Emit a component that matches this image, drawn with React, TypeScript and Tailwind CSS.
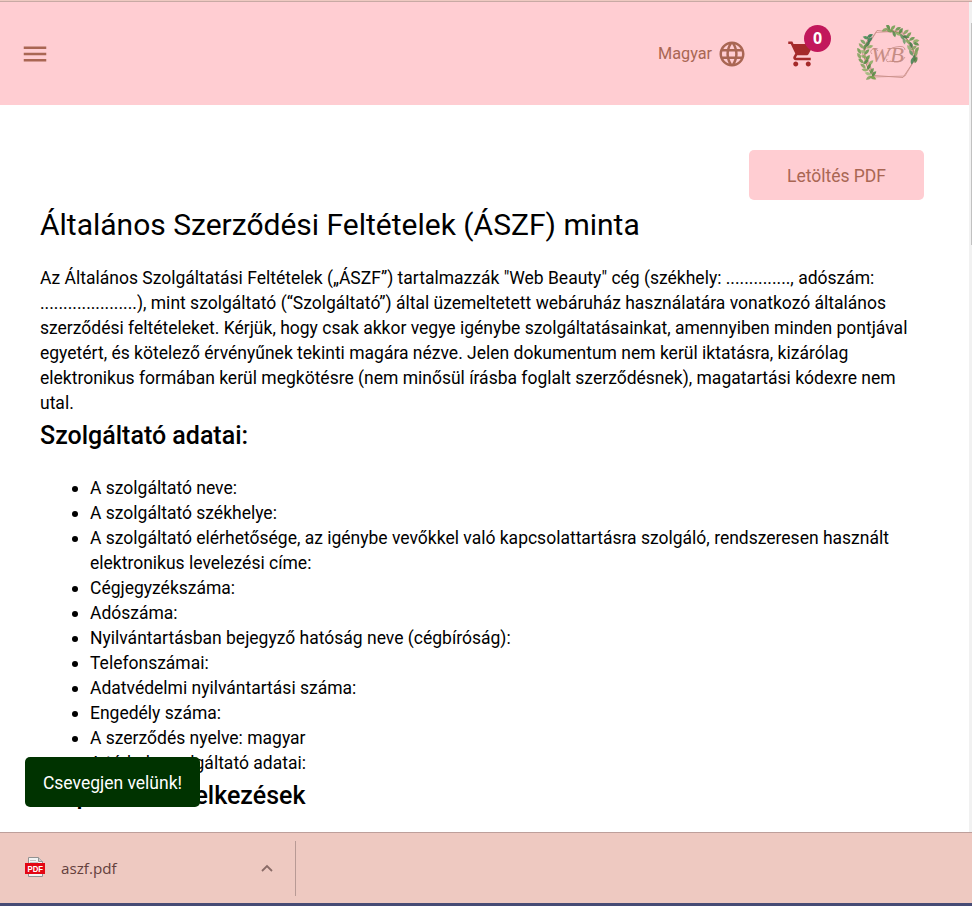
import React from "react";

const paragraph = [
  'Az Általános Szolgáltatási Feltételek („ÁSZF”) tartalmazzák "Web Beauty" cég (székhely: .............., adószám:',
  ".....................), mint szolgáltató (“Szolgáltató”) által üzemeltetett webáruház használatára vonatkozó általános",
  "szerződési feltételeket. Kérjük, hogy csak akkor vegye igénybe szolgáltatásainkat, amennyiben minden pontjával",
  "egyetért, és kötelező érvényűnek tekinti magára nézve. Jelen dokumentum nem kerül iktatásra, kizárólag",
  "elektronikus formában kerül megkötésre (nem minősül írásba foglalt szerződésnek), magatartási kódexre nem",
  "utal.",
];

const items: string[][] = [
  ["A szolgáltató neve:"],
  ["A szolgáltató székhelye:"],
  [
    "A szolgáltató elérhetősége, az igénybe vevőkkel való kapcsolattartásra szolgáló, rendszeresen használt",
    "elektronikus levelezési címe:",
  ],
  ["Cégjegyzékszáma:"],
  ["Adószáma:"],
  ["Nyilvántartásban bejegyző hatóság neve (cégbíróság):"],
  ["Telefonszámai:"],
  ["Adatvédelmi nyilvántartási száma:"],
  ["Engedély száma:"],
  ["A szerződés nyelve: magyar"],
  ["A tárhely szolgáltató adatai:"],
];

// x, y, rotation and shade of every leaf on the wreath
const leaves: [number, number, number, string][] = [
  [28, 5, -20, "#7fa05a"], [31, 2, 60, "#4f8a3f"], [33, 6, 10, "#6b9a4c"], [36, 3, -50, "#6f9f4c"],
  [37, 9, 70, "#4f8a45"], [41, 4, -30, "#5f9348"], [41, 9, 30, "#86ab5e"], [44, 6, -60, "#4f8a3f"],
  [45, 12, 60, "#5b8f58"], [49, 7, -40, "#7fa05a"], [49, 12, 10, "#3f7a45"], [52, 10, -50, "#6b9a4c"],
  [47, 16, 80, "#6b9a6c"], [51, 17, 40, "#86ab5e"], [55, 14, -30, "#5f9348"], [59, 16, -10, "#86ab5e"],
  [54, 20, 70, "#3f7a45"], [59, 19, 20, "#4f8a3f"], [52, 23, 60, "#8faf70"], [57, 23, -40, "#7fa05a"],
  [60, 25, -60, "#6b9a4c"], [54, 28, 60, "#5b8f58"], [59, 29, -60, "#7fa05a"], [57, 33, 90, "#3f7a45"],
  [55, 36, 100, "#3d8050"], [59, 35, -70, "#4f7f3f"],
  [13, 11, -30, "#2f7a50"], [9, 13, 20, "#3f8a4f"], [13, 15, -50, "#2f7a50"], [6, 17, 40, "#6fa05a"],
  [11, 19, -60, "#3f7a45"], [4, 21, 50, "#7fa05a"], [8, 22, -70, "#5b8f48"], [13, 22, -20, "#86ab5e"],
  [2, 26, 60, "#6b9a4c"], [6, 27, 20, "#9ab878"], [10, 27, -50, "#5f9348"], [2, 31, 60, "#7fa05a"],
  [7, 32, 20, "#86ab5e"], [11, 33, -60, "#5f9348"], [4, 36, 40, "#6b9a4c"], [9, 37, -40, "#4f8a3f"],
  [14, 38, -50, "#86ab5e"], [6, 41, 40, "#7fa05a"], [12, 42, -60, "#4f8a3f"], [8, 45, 10, "#86ab5e"],
  [15, 46, -60, "#5f9348"], [11, 49, 20, "#9ab878"], [17, 49, -50, "#4f8a3f"], [12, 53, -30, "#7fa05a"],
  [16, 53, 20, "#6b9a3c"],
];

function Logo() {
  return (
    <svg width="64" height="56" viewBox="0 0 64 56" className="block">
      <g fill="none" stroke="#c98f88" strokeWidth=".9">
        <path d="M20 5.500 46 8 59 33 46 52.500 17 50.500 5 28Z" />
        <path d="M19 7.500 45 6 60 31 48 51 18 52 7 27Z" strokeWidth=".7" />
      </g>
      <g fill="none" stroke="#9a7a55" strokeWidth=".8">
        <path d="M29 4Q48 7 54 20T57 36M14 10Q-1 30 17 52" />
      </g>
      {leaves.map(([x, y, angle, color], i) => (
        <path key={i} d="M-3.500 0Q0-3.700 3.500 0Q0 2.700-3.500 0Z" fill={color} fillOpacity=".85" transform={`translate(${x} ${y}) rotate(${angle})`} />
      ))}
      <text x="14" y="37" fontSize="20" fontStyle="italic" fontFamily="Liberation Serif, serif" fill="#c58c84" textLength="33" lengthAdjust="spacingAndGlyphs">WB</text>
      <path d="M15 29q-3-3 1-5q4-1 5 2M31 31q-1-8 8-9q9-2 9 3M30 34q-2 4 4 2M37 37q8 1 11-5" fill="none" stroke="#c58c84" strokeWidth=".8" />
    </svg>
  );
}

function Header() {
  return (
    <header className="flex h-[103px] items-start bg-[#ffcdd2] text-[#a96653]">
      <svg className="mt-[37px] ml-5" width="30" height="30" viewBox="0 0 24 24" fill="currentColor">
        <path d="M3 18h18v-2H3v2zm0-5h18v-2H3v2zm0-7v2h18V6H3z" />
      </svg>
      <div className="mt-[37px] ml-auto flex h-[30px] items-center">
        <span className="w-[59px] text-[16.250px] whitespace-nowrap">Magyar</span>
        <svg width="30" height="30" viewBox="0 0 24 24" fill="currentColor">
          <path d="M11.990 2C6.470 2 2 6.480 2 12s4.470 10 9.990 10C17.520 22 22 17.520 22 12S17.520 2 11.990 2zm6.930 6h-2.950c-.320-1.250-.780-2.450-1.380-3.560 1.840.630 3.370 1.910 4.330 3.560zM12 4.040c.830 1.200 1.480 2.530 1.910 3.960h-3.820c.430-1.430 1.080-2.760 1.910-3.960zM4.260 14C4.100 13.360 4 12.690 4 12s.100-1.360.260-2h3.380c-.080.660-.140 1.320-.140 2s.060 1.340.140 2H4.260zm.820 2h2.950c.320 1.250.780 2.450 1.380 3.560-1.840-.630-3.370-1.900-4.330-3.560zm2.950-8H5.080c.960-1.660 2.490-2.930 4.330-3.560C8.810 5.550 8.350 6.750 8.030 8zM12 19.960c-.830-1.200-1.480-2.530-1.910-3.960h3.820c-.430 1.430-1.080 2.760-1.910 3.960zM14.340 14H9.660c-.090-.660-.160-1.320-.160-2s.070-1.350.160-2h4.680c.090.650.160 1.320.160 2s-.070 1.340-.160 2zm.250 5.560c.600-1.110 1.060-2.310 1.380-3.560h2.950c-.960 1.650-2.490 2.930-4.330 3.560zM16.360 14c.080-.660.140-1.320.140-2s-.060-1.340-.140-2h3.380c.160.640.260 1.310.260 2s-.100 1.360-.260 2h-3.380z" />
        </svg>
      </div>
      <div className="relative mt-[37px] ml-[40px]">
        <svg width="30" height="30" viewBox="0 0 24 24" fill="#a52a2a">
          <path d="M7 18c-1.100 0-1.990.9-1.990 2S5.900 22 7 22s2-.9 2-2-.9-2-2-2zM1 2v2h2l3.600 7.590-1.350 2.450c-.160.280-.250.610-.250.960 0 1.100.9 2 2 2h12v-2H7.420c-.140 0-.250-.110-.250-.250l.030-.120.9-1.630h7.450c.750 0 1.410-.410 1.750-1.030l3.580-6.490c.080-.140.120-.310.120-.480 0-.550-.450-1-1-1H5.210l-.940-2H1zm16 16c-1.100 0-1.990.9-1.990 2s.890 2 1.990 2 2-.9 2-2-.9-2-2-2z" />
        </svg>
        <span className="absolute -top-[14px] left-[17px] flex size-[27px] items-center justify-center rounded-full bg-[#c2185b] pb-[2px] font-['Open_Sans',sans-serif] text-[16px] font-bold text-white">0</span>
      </div>
      <div className="mt-[23px] mr-[48px] ml-[40px]">
        <Logo />
      </div>
    </header>
  );
}

function DownloadBar() {
  return (
    <footer className="flex h-[71px] shrink-0 items-center border-t border-[#bd9f9b] bg-[#eec9c1]">
      <svg className="-mt-[3px] ml-[25px]" width="20" height="20" viewBox="0 0 20 20">
        <path d="M3.500.5h10l4 4v15h-14z" fill="#f3f3f3" stroke="#929292" />
        <path d="M13.500.5v4h4" fill="#ccc" stroke="#929292" />
        <path d="M5 3.500h6M5 5.500h8" stroke="#c2c2c2" />
        <path d="M0 6h20v11H0z" fill="#e30613" />
        <text x="2.500" y="14.500" fontSize="8.500" fontWeight="700" fontFamily="Liberation Sans, sans-serif" fill="#fff" textLength="15.500" lengthAdjust="spacingAndGlyphs">PDF</text>
      </svg>
      <span className="ml-4 w-[191px] font-['Open_Sans',sans-serif] text-[15.200px] text-[#64403d]">aszf.pdf</span>
      <svg className="ml-[9px]" width="12" height="8" viewBox="0 0 12 8" fill="none" stroke="#8a6b67" strokeWidth="1.800">
        <path d="m1 7 5-5 5 5" />
      </svg>
      <span className="ml-[22px] h-[55px] w-px bg-[#b89a95]" />
    </footer>
  );
}

export default function App() {
  return (
    <div className="relative flex h-[906px] w-[972px] flex-col overflow-hidden bg-white font-['Roboto',sans-serif] text-black">
      <div className="h-[2px] shrink-0 border-b border-[#c8a9a4] bg-[#eec9c1]" />
      <div className="flex h-[830px] shrink-0 overflow-hidden">
        <div className="w-[969px]">
          <Header />
          <main className="px-10 pt-[45px]">
            <div className="flex justify-end pr-[5px]">
              <button className="h-[50px] w-[175px] rounded-[5px] bg-[#ffcdd2] pt-0.5 text-[17.500px] text-[#a96653]">Letöltés PDF</button>
            </div>
            <h1 className="mt-[5px] text-[30px] leading-[40px] font-normal whitespace-nowrap">Általános Szerződési Feltételek (ÁSZF) minta</h1>
            <p className="mt-[21px] text-[17.500px] leading-[25px]">
              {paragraph.map((line) => (
                <span key={line} className="block whitespace-nowrap">{line}</span>
              ))}
            </p>
            <h2 className="mt-1 text-[25px] leading-[32px] font-medium">Szolgáltató adatai:</h2>
            <ul className="mt-6 pl-8 text-[17.500px] leading-[25px]">
              {items.map((lines) => (
                <li key={lines[0]} className="flex">
                  <span className="mt-2.5 mr-3 size-1.5 rounded-full bg-black" />
                  <div>
                    {lines.map((line) => (
                      <span key={line} className="block whitespace-nowrap">{line}</span>
                    ))}
                  </div>
                </li>
              ))}
            </ul>
            <h2 className="mt-1 text-[25px] leading-[32px] font-medium">Alapvető rendelkezések</h2>
          </main>
        </div>
        <div className="flex w-[3px] justify-end bg-[#f1f1f1] pt-[21px]">
          <div className="h-[222px] w-px bg-[#c1c1c1]" />
        </div>
      </div>
      <DownloadBar />
      <div className="h-[3px] shrink-0 bg-[#464b75]" />
      <button className="absolute top-[757px] left-[25px] h-[50px] w-[175px] rounded-[5px] bg-[#003300] pt-0.5 text-[17.500px] text-white">Csevegjen velünk!</button>
    </div>
  );
}
